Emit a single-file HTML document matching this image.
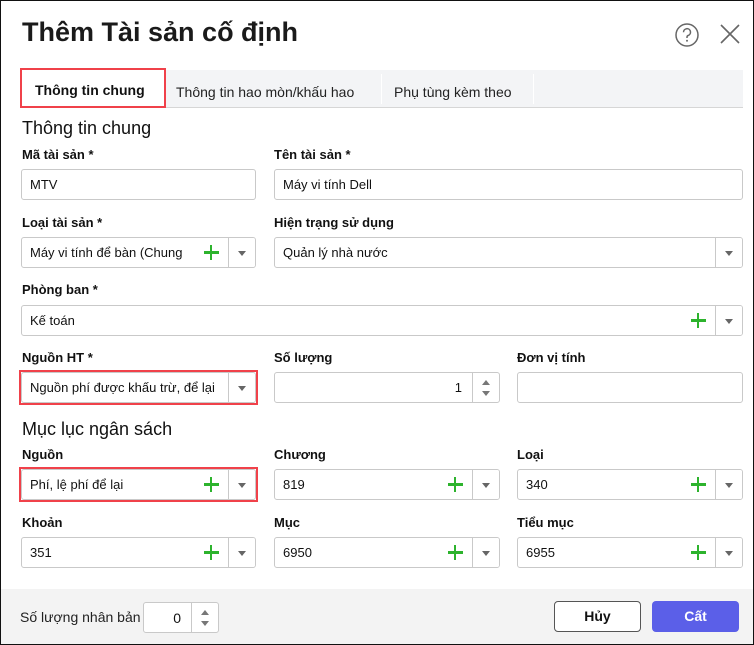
<!DOCTYPE html>
<html><head><meta charset="utf-8"><style>
*{box-sizing:border-box;margin:0;padding:0}
body{width:754px;height:645px;position:relative;overflow:hidden;font-family:"Liberation Sans",Arial,sans-serif;color:#111;background:#fff}
.frame{position:absolute;left:0;top:0;width:754px;height:645px;border:1px solid #111;z-index:10;pointer-events:none}
.abs{position:absolute}
.title{left:22px;top:17px;font-size:27px;font-weight:bold;color:#1a1a1a}
.tabs{left:21px;top:70px;width:722px;height:38px;background:#f3f4f6;border-bottom:1px solid #d6d6d6}
.tab{position:absolute;top:0;height:37px;line-height:45px;font-size:14px;color:#222}
.h{font-size:18px;color:#111}
.lbl{font-size:13px;font-weight:bold;color:#111}
.in{position:absolute;height:31px;border:1px solid #c9c9c9;border-radius:3px;background:#fff;font-size:13px;line-height:30px;padding-left:8px;color:#111;white-space:nowrap;overflow:hidden}
.dd{position:absolute;right:0;top:0;width:27px;height:29px;border-left:1px solid #c9c9c9;background:#fff}
.dd:after{content:"";position:absolute;left:9px;top:13px;border-left:4.5px solid transparent;border-right:4.5px solid transparent;border-top:5px solid #666}
.plus{position:absolute;top:7px;right:36px;width:15px;height:15px;background:#fff}
.plus:before{content:"";position:absolute;left:6px;top:0;width:2.4px;height:15px;background:#2db32d}
.plus:after{content:"";position:absolute;left:0;top:6.3px;width:15px;height:2.4px;background:#2db32d}
.red{position:absolute;border:2.5px solid #f0414a}
.foot{left:1px;top:589px;width:752px;height:56px;background:#f3f3f3}
.btn{position:absolute;height:31px;border-radius:4px;font-size:14px;font-weight:bold;text-align:center;line-height:29px}
</style></head><body>
<div class="frame"></div>
<div class="abs title">Thêm Tài sản cố định</div>
<svg class="abs" style="left:674px;top:22px" width="26" height="26" viewBox="0 0 26 26"><circle cx="13" cy="13" r="11" fill="none" stroke="#666" stroke-width="1.5"/><path d="M9.5 10.2a3.5 3.5 0 1 1 4.6 3.3c-.8.3-1.1.9-1.1 1.7v.8" fill="none" stroke="#666" stroke-width="1.5"/><circle cx="13" cy="18.7" r="1" fill="#666"/></svg>
<svg class="abs" style="left:720px;top:24px" width="20" height="20" viewBox="0 0 20 20"><path d="M1 1L19 19M19 1L1 19" stroke="#666" stroke-width="1.6"/></svg>

<div class="abs tabs">
<div class="tab" style="left:0;width:145px;background:#fff;height:38px"></div>
<div class="tab" style="left:155px">Thông tin hao mòn/khấu hao</div>
<div class="tab" style="left:360px;width:1px;height:30px;top:4px;background:#fff"></div>
<div class="tab" style="left:373px">Phụ tùng kèm theo</div>
<div class="tab" style="left:512px;width:1px;height:30px;top:4px;background:#fff"></div>
</div>
<div class="red" style="left:20px;top:68px;width:146px;height:40px;font-size:14px;font-weight:bold;line-height:41px;padding-left:13px">Thông tin chung</div>

<div class="abs h" style="left:22px;top:118px">Thông tin chung</div>
<div class="abs lbl" style="left:22px;top:147px">Mã tài sản *</div>
<div class="abs lbl" style="left:274px;top:147px">Tên tài sản *</div>
<div class="in" style="left:21px;top:169px;width:235px">MTV</div>
<div class="in" style="left:274px;top:169px;width:469px">Máy vi tính Dell</div>

<div class="abs lbl" style="left:22px;top:215px">Loại tài sản *</div>
<div class="abs lbl" style="left:274px;top:215px">Hiện trạng sử dụng</div>
<div class="in" style="left:21px;top:237px;width:235px">Máy vi tính để bàn (Chung<span class="plus"></span><span class="dd"></span></div>
<div class="in" style="left:274px;top:237px;width:469px">Quản lý nhà nước<span class="dd"></span></div>

<div class="abs lbl" style="left:22px;top:282px">Phòng ban *</div>
<div class="in" style="left:21px;top:305px;width:722px">Kế toán<span class="plus"></span><span class="dd"></span></div>

<div class="abs lbl" style="left:22px;top:350px">Nguồn HT *</div>
<div class="abs lbl" style="left:274px;top:350px">Số lượng</div>
<div class="abs lbl" style="left:517px;top:350px">Đơn vị tính</div>
<div class="in" style="left:21px;top:372px;width:235px">Nguồn phí được khấu trừ, để lại<span class="dd"></span></div>
<div class="red" style="left:19px;top:370px;width:239px;height:35px"></div>
<div class="in" style="left:274px;top:372px;width:226px;text-align:right;padding-right:37px">1<span style="position:absolute;right:0;top:0;width:27px;height:29px;border-left:1px solid #c9c9c9"><svg width="27" height="29" style="position:absolute;left:0;top:0"><path d="M9 12l4-5 4 5z M9 18l4 5 4-5z" fill="#777"/></svg></span></div>
<div class="in" style="left:517px;top:372px;width:226px"></div>

<div class="abs h" style="left:22px;top:419px">Mục lục ngân sách</div>
<div class="abs lbl" style="left:22px;top:447px">Nguồn</div>
<div class="abs lbl" style="left:274px;top:447px">Chương</div>
<div class="abs lbl" style="left:517px;top:447px">Loại</div>
<div class="in" style="left:21px;top:469px;width:235px">Phí, lệ phí để lại<span class="plus"></span><span class="dd"></span></div>
<div class="red" style="left:19px;top:467px;width:239px;height:35px"></div>
<div class="in" style="left:274px;top:469px;width:226px">819<span class="plus"></span><span class="dd"></span></div>
<div class="in" style="left:517px;top:469px;width:226px">340<span class="plus"></span><span class="dd"></span></div>

<div class="abs lbl" style="left:22px;top:515px">Khoản</div>
<div class="abs lbl" style="left:274px;top:515px">Mục</div>
<div class="abs lbl" style="left:517px;top:515px">Tiểu mục</div>
<div class="in" style="left:21px;top:537px;width:235px">351<span class="plus"></span><span class="dd"></span></div>
<div class="in" style="left:274px;top:537px;width:226px">6950<span class="plus"></span><span class="dd"></span></div>
<div class="in" style="left:517px;top:537px;width:226px">6955<span class="plus"></span><span class="dd"></span></div>

<div class="abs foot"></div>
<div class="abs" style="left:20px;top:609px;font-size:14px;color:#222">Số lượng nhân bản</div>
<div class="in" style="left:143px;top:602px;width:76px;text-align:right;padding-right:37px;font-size:14px">0<span style="position:absolute;right:0;top:0;width:27px;height:29px;border-left:1px solid #c9c9c9"><svg width="27" height="29" style="position:absolute;left:0;top:0"><path d="M9 12l4-5 4 5z M9 18l4 5 4-5z" fill="#777"/></svg></span></div>
<div class="btn" style="left:554px;top:601px;width:87px;border:1px solid #555;background:#fff;color:#111">Hủy</div>
<div class="btn" style="left:652px;top:601px;width:87px;background:#5b5fe8;color:#fff;line-height:31px">Cất</div>
</body></html>
